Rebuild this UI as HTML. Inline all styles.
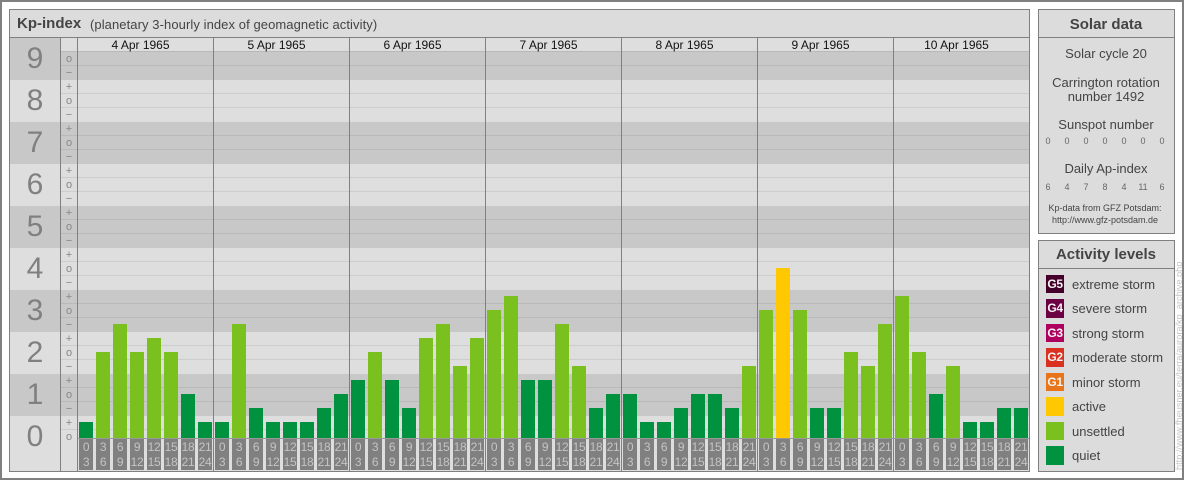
<!DOCTYPE html>
<html><head><meta charset="utf-8">
<style>
html,body{margin:0;padding:0;background:#fff}
#p{position:relative;width:1180px;height:476px;border:2px solid #808080;overflow:hidden;background:#fff;font-family:"Liberation Sans",sans-serif;color:#444;margin:0;left:0;top:0}
#w{position:absolute;left:-2px;top:-2px;width:1184px;height:480px}
#w div{position:absolute;box-sizing:border-box}
.pn{background:#dcdcdc;border:1px solid #808080}
.h{height:1px;background:#808080}
.v{width:1px;background:#808080;top:38px;height:433px}
.bd{left:10px;width:1019px;height:42px;background:#c8c8c8}
.bl{left:10px;width:1019px;background:#dedede}
.n{left:10px;width:50px;height:42px;line-height:42px;text-align:center;font-size:30px;color:#808080}
.l{left:78px;width:951px;height:1px;background:#b9b9b9}
.m{left:61px;width:16px;height:1px;background:#b9b9b9}
.ll{background:#cdcdcd}
.s{left:61px;width:16px;height:15px;line-height:14px;padding-top:1px;text-align:center;font-size:11px;color:#888}
.d{top:39px;height:13px;width:135px;line-height:13px;text-align:center;font-size:12px;color:#111}
.b{width:14px;bottom:42px}
.q{background:#00923f}.u{background:#7ac11f}.a{background:#ffc800}
.t{top:439px;height:31px;width:14px;background:#808080;color:#c4c4c4;font-size:12px;line-height:14.5px;text-align:center;padding-top:1px;white-space:nowrap;letter-spacing:-.3px}
.c{left:1039px;width:134px;text-align:center;font-size:13px;color:#444;height:14px;line-height:14px;white-space:nowrap}
.f{width:16px;text-align:center;font-size:9px;color:#666;height:12px;line-height:12px}
.k{left:1046px;width:18px;height:18px;color:#f4f4f4;font-size:12px;font-weight:bold;line-height:18px;text-align:center;letter-spacing:-.4px}
.x{left:1072px;font-size:13px;color:#444;height:19px;line-height:18px;padding-top:1px;white-space:nowrap}
</style></head><body>
<div id="p"><div id="w">
<div class="pn" style="left:9px;top:9px;width:1021px;height:463px"></div>
<div class="pn" style="left:1038px;top:9px;width:137px;height:225px"></div>
<div class="pn" style="left:1038px;top:240px;width:137px;height:232px"></div>
<div class="h" style="left:10px;top:37px;width:1019px"></div>
<div class="h" style="left:1039px;top:37px;width:135px"></div>
<div class="h" style="left:1039px;top:268px;width:135px"></div>
<div style="left:17px;top:16px;height:16px;line-height:16px;font-size:15px;font-weight:bold;color:#444;white-space:nowrap">Kp-index</div>
<div style="left:90px;top:17px;height:16px;line-height:16px;font-size:13px;letter-spacing:.08px;color:#444;white-space:nowrap">(planetary 3-hourly index of geomagnetic activity)</div>

<div class="bl" style="top:38px;height:433px"></div>
<div class="bd" style="top:38px"></div>
<div class="bd" style="top:122px"></div>
<div class="bd" style="top:206px"></div>
<div class="bd" style="top:290px"></div>
<div class="bd" style="top:374px"></div>
<div class="bl" style="left:61px;width:968px;top:38px;height:13px"></div>

<div class="l" style="top:51px"></div><div class="l" style="top:65px"></div>
<div class="l ll" style="top:93px"></div><div class="l ll" style="top:107px"></div>
<div class="l" style="top:135px"></div><div class="l" style="top:149px"></div>
<div class="l ll" style="top:177px"></div><div class="l ll" style="top:191px"></div>
<div class="l" style="top:219px"></div><div class="l" style="top:233px"></div>
<div class="l ll" style="top:261px"></div><div class="l ll" style="top:275px"></div>
<div class="l" style="top:303px"></div><div class="l" style="top:317px"></div>
<div class="l ll" style="top:345px"></div><div class="l ll" style="top:359px"></div>
<div class="l" style="top:387px"></div><div class="l" style="top:401px"></div>
<div class="l ll" style="top:429px"></div>
<div class="m" style="top:51px"></div><div class="m" style="top:65px"></div>
<div class="m ll" style="top:93px"></div><div class="m ll" style="top:107px"></div>
<div class="m" style="top:135px"></div><div class="m" style="top:149px"></div>
<div class="m ll" style="top:177px"></div><div class="m ll" style="top:191px"></div>
<div class="m" style="top:219px"></div><div class="m" style="top:233px"></div>
<div class="m ll" style="top:261px"></div><div class="m ll" style="top:275px"></div>
<div class="m" style="top:303px"></div><div class="m" style="top:317px"></div>
<div class="m ll" style="top:345px"></div><div class="m ll" style="top:359px"></div>
<div class="m" style="top:387px"></div><div class="m" style="top:401px"></div>
<div class="m ll" style="top:429px"></div>

<div class="n" style="top:38px">9</div><div class="n" style="top:80px">8</div><div class="n" style="top:122px">7</div><div class="n" style="top:164px">6</div><div class="n" style="top:206px">5</div><div class="n" style="top:248px">4</div><div class="n" style="top:290px">3</div><div class="n" style="top:332px">2</div><div class="n" style="top:374px">1</div><div class="n" style="top:416px">0</div>

<div class="s" style="top:51px">o</div><div class="s" style="top:65px">&#8722;</div>
<div class="s" style="top:79px">+</div><div class="s" style="top:93px">o</div><div class="s" style="top:107px">&#8722;</div>
<div class="s" style="top:121px">+</div><div class="s" style="top:135px">o</div><div class="s" style="top:149px">&#8722;</div>
<div class="s" style="top:163px">+</div><div class="s" style="top:177px">o</div><div class="s" style="top:191px">&#8722;</div>
<div class="s" style="top:205px">+</div><div class="s" style="top:219px">o</div><div class="s" style="top:233px">&#8722;</div>
<div class="s" style="top:247px">+</div><div class="s" style="top:261px">o</div><div class="s" style="top:275px">&#8722;</div>
<div class="s" style="top:289px">+</div><div class="s" style="top:303px">o</div><div class="s" style="top:317px">&#8722;</div>
<div class="s" style="top:331px">+</div><div class="s" style="top:345px">o</div><div class="s" style="top:359px">&#8722;</div>
<div class="s" style="top:373px">+</div><div class="s" style="top:387px">o</div><div class="s" style="top:401px">&#8722;</div>
<div class="s" style="top:415px">+</div><div class="s" style="top:429px">o</div>

<div class="v" style="left:60px"></div><div class="v" style="left:77px"></div><div class="v" style="left:213px"></div><div class="v" style="left:349px"></div><div class="v" style="left:485px"></div><div class="v" style="left:621px"></div><div class="v" style="left:757px"></div><div class="v" style="left:893px"></div>

<div class="d" style="left:73px">4 Apr 1965</div><div class="d" style="left:209px">5 Apr 1965</div><div class="d" style="left:345px">6 Apr 1965</div><div class="d" style="left:481px">7 Apr 1965</div><div class="d" style="left:617px">8 Apr 1965</div><div class="d" style="left:753px">9 Apr 1965</div><div class="d" style="left:889px">10 Apr 1965</div>

<div class="b q" style="left:79px;height:16px"></div><div class="b u" style="left:96px;height:86px"></div><div class="b u" style="left:113px;height:114px"></div><div class="b u" style="left:130px;height:86px"></div><div class="b u" style="left:147px;height:100px"></div><div class="b u" style="left:164px;height:86px"></div><div class="b q" style="left:181px;height:44px"></div><div class="b q" style="left:198px;height:16px"></div>
<div class="b q" style="left:215px;height:16px"></div><div class="b u" style="left:232px;height:114px"></div><div class="b q" style="left:249px;height:30px"></div><div class="b q" style="left:266px;height:16px"></div><div class="b q" style="left:283px;height:16px"></div><div class="b q" style="left:300px;height:16px"></div><div class="b q" style="left:317px;height:30px"></div><div class="b q" style="left:334px;height:44px"></div>
<div class="b q" style="left:351px;height:58px"></div><div class="b u" style="left:368px;height:86px"></div><div class="b q" style="left:385px;height:58px"></div><div class="b q" style="left:402px;height:30px"></div><div class="b u" style="left:419px;height:100px"></div><div class="b u" style="left:436px;height:114px"></div><div class="b u" style="left:453px;height:72px"></div><div class="b u" style="left:470px;height:100px"></div>
<div class="b u" style="left:487px;height:128px"></div><div class="b u" style="left:504px;height:142px"></div><div class="b q" style="left:521px;height:58px"></div><div class="b q" style="left:538px;height:58px"></div><div class="b u" style="left:555px;height:114px"></div><div class="b u" style="left:572px;height:72px"></div><div class="b q" style="left:589px;height:30px"></div><div class="b q" style="left:606px;height:44px"></div>
<div class="b q" style="left:623px;height:44px"></div><div class="b q" style="left:640px;height:16px"></div><div class="b q" style="left:657px;height:16px"></div><div class="b q" style="left:674px;height:30px"></div><div class="b q" style="left:691px;height:44px"></div><div class="b q" style="left:708px;height:44px"></div><div class="b q" style="left:725px;height:30px"></div><div class="b u" style="left:742px;height:72px"></div>
<div class="b u" style="left:759px;height:128px"></div><div class="b a" style="left:776px;height:170px"></div><div class="b u" style="left:793px;height:128px"></div><div class="b q" style="left:810px;height:30px"></div><div class="b q" style="left:827px;height:30px"></div><div class="b u" style="left:844px;height:86px"></div><div class="b u" style="left:861px;height:72px"></div><div class="b u" style="left:878px;height:114px"></div>
<div class="b u" style="left:895px;height:142px"></div><div class="b u" style="left:912px;height:86px"></div><div class="b q" style="left:929px;height:44px"></div><div class="b u" style="left:946px;height:72px"></div><div class="b q" style="left:963px;height:16px"></div><div class="b q" style="left:980px;height:16px"></div><div class="b q" style="left:997px;height:30px"></div><div class="b q" style="left:1014px;height:30px"></div>

<div class="h" style="left:78px;top:438px;width:951px;background:#999"></div>

<div class="t" style="left:79px">0<br>3</div><div class="t" style="left:96px">3<br>6</div><div class="t" style="left:113px">6<br>9</div><div class="t" style="left:130px">9<br>12</div><div class="t" style="left:147px">12<br>15</div><div class="t" style="left:164px">15<br>18</div><div class="t" style="left:181px">18<br>21</div><div class="t" style="left:198px">21<br>24</div>
<div class="t" style="left:215px">0<br>3</div><div class="t" style="left:232px">3<br>6</div><div class="t" style="left:249px">6<br>9</div><div class="t" style="left:266px">9<br>12</div><div class="t" style="left:283px">12<br>15</div><div class="t" style="left:300px">15<br>18</div><div class="t" style="left:317px">18<br>21</div><div class="t" style="left:334px">21<br>24</div>
<div class="t" style="left:351px">0<br>3</div><div class="t" style="left:368px">3<br>6</div><div class="t" style="left:385px">6<br>9</div><div class="t" style="left:402px">9<br>12</div><div class="t" style="left:419px">12<br>15</div><div class="t" style="left:436px">15<br>18</div><div class="t" style="left:453px">18<br>21</div><div class="t" style="left:470px">21<br>24</div>
<div class="t" style="left:487px">0<br>3</div><div class="t" style="left:504px">3<br>6</div><div class="t" style="left:521px">6<br>9</div><div class="t" style="left:538px">9<br>12</div><div class="t" style="left:555px">12<br>15</div><div class="t" style="left:572px">15<br>18</div><div class="t" style="left:589px">18<br>21</div><div class="t" style="left:606px">21<br>24</div>
<div class="t" style="left:623px">0<br>3</div><div class="t" style="left:640px">3<br>6</div><div class="t" style="left:657px">6<br>9</div><div class="t" style="left:674px">9<br>12</div><div class="t" style="left:691px">12<br>15</div><div class="t" style="left:708px">15<br>18</div><div class="t" style="left:725px">18<br>21</div><div class="t" style="left:742px">21<br>24</div>
<div class="t" style="left:759px">0<br>3</div><div class="t" style="left:776px">3<br>6</div><div class="t" style="left:793px">6<br>9</div><div class="t" style="left:810px">9<br>12</div><div class="t" style="left:827px">12<br>15</div><div class="t" style="left:844px">15<br>18</div><div class="t" style="left:861px">18<br>21</div><div class="t" style="left:878px">21<br>24</div>
<div class="t" style="left:895px">0<br>3</div><div class="t" style="left:912px">3<br>6</div><div class="t" style="left:929px">6<br>9</div><div class="t" style="left:946px">9<br>12</div><div class="t" style="left:963px">12<br>15</div><div class="t" style="left:980px">15<br>18</div><div class="t" style="left:997px">18<br>21</div><div class="t" style="left:1014px">21<br>24</div>

<div class="c" style="top:17px;font-size:15px;font-weight:bold;height:16px;line-height:16px">Solar data</div>
<div class="c" style="top:47px">Solar cycle 20</div>
<div class="c" style="top:76px">Carrington rotation</div>
<div class="c" style="top:90px">number 1492</div>
<div class="c" style="top:118px">Sunspot number</div>
<div class="f" style="left:1040px;top:135px">0</div><div class="f" style="left:1059px;top:135px">0</div><div class="f" style="left:1078px;top:135px">0</div><div class="f" style="left:1097px;top:135px">0</div><div class="f" style="left:1116px;top:135px">0</div><div class="f" style="left:1135px;top:135px">0</div><div class="f" style="left:1154px;top:135px">0</div>
<div class="c" style="top:162px">Daily Ap-index</div>
<div class="f" style="left:1040px;top:181px">6</div><div class="f" style="left:1059px;top:181px">4</div><div class="f" style="left:1078px;top:181px">7</div><div class="f" style="left:1097px;top:181px">8</div><div class="f" style="left:1116px;top:181px">4</div><div class="f" style="left:1135px;top:181px">11</div><div class="f" style="left:1154px;top:181px">6</div>
<div class="c" style="left:1038px;top:202px;font-size:9px;height:12px;line-height:12px">Kp-data from GFZ Potsdam:</div>
<div class="c" style="left:1038px;top:214px;font-size:9px;height:12px;line-height:12px">http://www.gfz-potsdam.de</div>

<div class="c" style="top:247px;font-size:15px;font-weight:bold;height:16px;line-height:16px">Activity levels</div>
<div class="k" style="top:275px;background:#45002a">G5</div><div class="x" style="top:275px">extreme storm</div>
<div class="k" style="top:299px;background:#6b0043;height:19px">G4</div><div class="x" style="top:299px">severe storm</div>
<div class="k" style="top:324px;background:#ae005e">G3</div><div class="x" style="top:324px">strong storm</div>
<div class="k" style="top:348px;background:#d9301f;height:19px">G2</div><div class="x" style="top:348px">moderate storm</div>
<div class="k" style="top:373px;background:#e8751a">G1</div><div class="x" style="top:373px">minor storm</div>
<div class="k" style="top:397px;background:#ffc800;height:19px"></div><div class="x" style="top:397px">active</div>
<div class="k" style="top:422px;background:#7ac11f"></div><div class="x" style="top:422px">unsettled</div>
<div class="k" style="top:446px;background:#00923f;height:19px"></div><div class="x" style="top:446px">quiet</div>

<div style="left:1074px;top:359px;width:210px;height:12px;line-height:12px;font-size:9.2px;color:#c4c4c4;text-align:left;white-space:nowrap;transform:rotate(-90deg);transform-origin:center">http://www.fheusner.eu/terra/aurora/kp_archive.php</div>
</div></div>
</body></html>
